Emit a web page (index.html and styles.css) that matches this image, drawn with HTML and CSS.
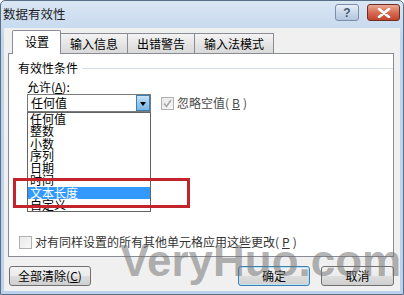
FILE: index.html
```html
<!DOCTYPE html>
<html lang="zh-CN">
<head>
<meta charset="UTF-8">
<title>数据有效性</title>
<link rel="stylesheet" href="styles.css">
</head>
<body>
    <div class="window">
        <!-- Title bar -->
        <div class="titlebar">
            <span class="title">数据有效性</span>
            <div class="caption-btns">
                <span class="cap-btn help">?</span>
                <span class="cap-btn close">
                    <svg width="14" height="10" viewBox="0 0 14 10">
                        <path d="M2 1 L12 9 M12 1 L2 9" stroke="#fff" stroke-width="2.6" stroke-linecap="round"/>
                    </svg>
                </span>
            </div>
        </div>

        <div class="client">
            <!-- Tabs -->
            <div class="tabs">
                <span class="tab active">设置</span>
                <span class="tab">输入信息</span>
                <span class="tab">出错警告</span>
                <span class="tab">输入法模式</span>
            </div>

            <div class="panel">
                <div class="group-title"><span>有效性条件</span></div>
                <div class="allow-label">允许(<u>A</u>):</div>
                <div class="allow-row">
                    <div class="combo">
                        <span class="combo-text">任何值</span>
                        <span class="combo-btn"></span>
                    </div>
                    <label class="check disabled">
                        <span class="box checked">
                            <svg width="11" height="11" viewBox="0 0 11 11">
                                <path d="M2 5.5 L4.5 8.5 L9 2" fill="none" stroke="#a8a8a8" stroke-width="1.6"/>
                            </svg>
                        </span>
                        忽略空值(<u>B</u>)
                    </label>
                </div>

                <label class="check apply">
                    <span class="box"></span>
                    对有同样设置的所有其他单元格应用这些更改(<u>P</u>)
                </label>

                <!-- Open dropdown -->
                <ul class="droplist">
                    <li>任何值</li>
                    <li>整数</li>
                    <li>小数</li>
                    <li>序列</li>
                    <li>日期</li>
                    <li>时间</li>
                    <li class="selected">文本长度</li>
                    <li>自定义</li>
                </ul>

                <!-- Red annotation box -->
                <div class="mark"></div>
            </div>

            <div class="buttons">
                <button class="btn clear">全部清除(<u>C</u>)</button>
                <span class="spacer"></span>
                <button class="btn ok">确定</button>
                <button class="btn">取消</button>
            </div>
        </div>

        <div class="watermark">VeryHuo.com</div>
    </div>
</body>
</html>
```

FILE: styles.css
```css
body, html {
    margin: 0;
    padding: 0;
    font-family: "Noto Sans CJK SC", "Liberation Sans", sans-serif;
    font-size: 12px;
    color: #000;
}

u {
    text-decoration: underline;
}

.window {
    position: relative;
    width: 404px;
    height: 295px;
    box-sizing: border-box;
    background: linear-gradient(#d9e6f4, #c1d5ec 40px, #bcd2ec);
    border: 1px solid #5a6e88;
    border-radius: 5px 5px 0 0;
    overflow: hidden;
}

.titlebar {
    height: 27px;
    display: flex;
    align-items: center;
    justify-content: space-between;
    padding: 0 3px 0 2px;
}

.title {
    font-size: 12.5px;
    line-height: 14px;
    color: #1e1e1e;
    margin-top: -2px;
}

.caption-btns {
    display: flex;
    gap: 8px;
    margin-top: -4px;
}

.cap-btn {
    height: 17px;
    box-sizing: border-box;
    border-radius: 3px;
    display: flex;
    align-items: center;
    justify-content: center;
}

.cap-btn.help {
    width: 24px;
    border: 1px solid #7d8ea6;
    background: linear-gradient(#e8eff8, #c9d8ea 50%, #b3c6de);
    color: #4b5a70;
    font-family: "Liberation Sans", sans-serif;
    font-weight: bold;
    font-size: 12px;
}

.cap-btn.close {
    width: 33px;
    border: 1px solid #6e2c22;
    background: linear-gradient(#eaa996, #d86c55 50%, #c3432b);
}

.client {
    height: 263px;
    margin: 0 3px;
    box-sizing: border-box;
    background: #f0f0f0;
    padding-top: 2px;
    display: flex;
    flex-direction: column;
}

.tabs {
    display: flex;
    align-items: flex-end;
    padding-left: 8px;
    height: 23px;
    position: relative;
    z-index: 2;
}

.tab {
    height: 19px;
    line-height: 19px;
    box-sizing: content-box;
    padding: 0 9px;
    border: 1px solid #898c95;
    border-bottom: none;
    border-left: none;
    background: linear-gradient(#f3f3f3, #e6e6e6 50%, #d9d9d9);
    font-size: 12px;
}

.tab.active {
    height: 23px;
    line-height: 21px;
    margin-bottom: -1px;
    padding: 0 11px 0 12px;
    border-left: 1px solid #898c95;
    background: #fff;
    border-radius: 2px 2px 0 0;
}

.panel {
    position: relative;
    margin: 0 6px 0 4px;
    height: 204px;
    box-sizing: border-box;
    background: #fff;
    border: 1px solid #898c95;
    display: flex;
    flex-direction: column;
    padding: 7px 0 7px 9px;
}

.group-title {
    display: flex;
    align-items: center;
    line-height: 14px;
    font-size: 12px;
}

.group-title::after {
    content: "";
    flex: 1;
    height: 1px;
    background: #d5dfe5;
    margin: 0 0 0 4px;
}

.allow-label {
    margin: 5px 0 0 9px;
    line-height: 14px;
}

.allow-row {
    display: flex;
    align-items: center;
    gap: 10px;
    margin-left: 9px;
}

.combo {
    width: 124px;
    height: 18px;
    box-sizing: border-box;
    border: 1px solid #7a7a7a;
    display: flex;
    align-items: center;
    background: #fff;
}

.combo-text {
    flex: 1;
    padding-left: 3px;
    line-height: 16px;
}

.combo-btn {
    width: 14px;
    height: 16px;
    box-sizing: border-box;
    border: 1px solid #3c7fb1;
    background: linear-gradient(#c9e4f8, #98c9ee 50%, #7ab5e4);
    position: relative;
}

.combo-btn::after {
    content: "";
    position: absolute;
    left: 3px;
    top: 6px;
    border-left: 3.5px solid transparent;
    border-right: 3.5px solid transparent;
    border-top: 4px solid #000;
}

.check {
    display: flex;
    align-items: center;
    gap: 3px;
    line-height: 14px;
}

.check.disabled {
    color: #4a4a4a;
}

.box {
    width: 13px;
    height: 13px;
    box-sizing: border-box;
    border: 1px solid #b1b1b1;
    background: linear-gradient(135deg, #e9e9e9, #f8f8f8);
    display: flex;
    align-items: center;
    justify-content: center;
}

.check.apply {
    margin-top: auto;
    margin-left: 1px;
    color: #333;
}

.droplist {
    position: absolute;
    left: 18px;
    top: 58px;
    width: 124px;
    height: 100px;
    box-sizing: border-box;
    margin: 0;
    padding: 0;
    list-style: none;
    border: 1px solid #646464;
    background: #fff;
    overflow: hidden;
}

.droplist li {
    height: 12.3px;
    line-height: 12.3px;
    padding-left: 2px;
    font-size: 12px;
}

.droplist li.selected {
    background: #3399ff;
    color: #fff;
}

.mark {
    position: absolute;
    left: 4px;
    top: 124px;
    width: 177px;
    height: 30px;
    box-sizing: border-box;
    border: 3px solid #c3232b;
}

.buttons {
    display: flex;
    align-items: center;
    gap: 11px;
    margin: 9px 6px 0 5px;
}

.spacer {
    flex: 1;
}

.btn {
    height: 20px;
    width: 73px;
    box-sizing: border-box;
    border: 1px solid #707070;
    border-radius: 3px;
    background: linear-gradient(#f2f2f2, #ebebeb 50%, #dddddd 51%, #cfcfcf);
    font-family: "Noto Sans CJK SC", "Liberation Sans", sans-serif;
    font-size: 12px;
    line-height: 16px;
    padding: 0;
    color: #000;
}

.btn.clear {
    width: 82px;
}

.btn.ok {
    width: 72px;
    border-color: #3c7fb1;
    box-shadow: inset 0 0 0 1px #b9e4f7;
}

.watermark {
    position: absolute;
    left: 119px;
    top: 238px;
    font-family: "Liberation Sans", sans-serif;
    font-weight: bold;
    font-size: 44px;
    line-height: 1;
    color: rgba(115, 115, 115, 0.55);
    letter-spacing: 0;
    pointer-events: none;
}
```
